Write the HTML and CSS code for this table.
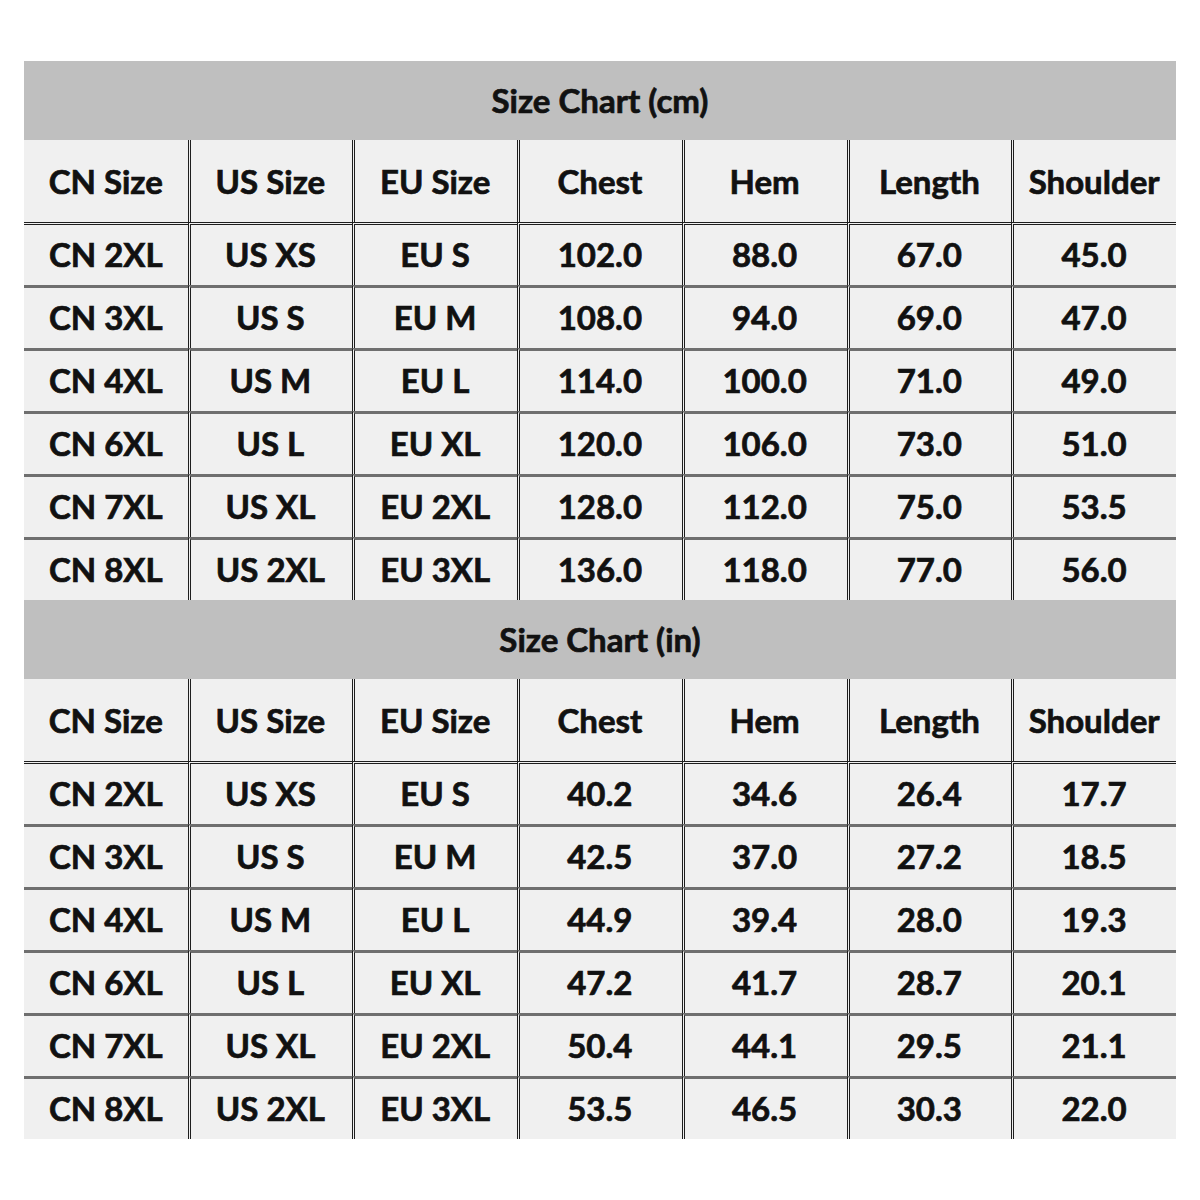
FILE: index.html
```html
<!DOCTYPE html>
<html>
<head>
<meta charset="utf-8">
<link rel="stylesheet" href="styles.css">
</head>
<body>
<div class="chart">
  <div class="title">Size Chart (cm)</div>
  <div class="grid">
    <div class="c h">CN Size</div><div class="c h">US Size</div><div class="c h">EU Size</div><div class="c h">Chest</div><div class="c h">Hem</div><div class="c h">Length</div><div class="c h">Shoulder</div>
    <div class="c f">CN 2XL</div><div class="c f">US XS</div><div class="c f">EU S</div><div class="c f">102.0</div><div class="c f">88.0</div><div class="c f">67.0</div><div class="c f">45.0</div>
    <div class="c">CN 3XL</div><div class="c">US S</div><div class="c">EU M</div><div class="c">108.0</div><div class="c">94.0</div><div class="c">69.0</div><div class="c">47.0</div>
    <div class="c">CN 4XL</div><div class="c">US M</div><div class="c">EU L</div><div class="c">114.0</div><div class="c">100.0</div><div class="c">71.0</div><div class="c">49.0</div>
    <div class="c">CN 6XL</div><div class="c">US L</div><div class="c">EU XL</div><div class="c">120.0</div><div class="c">106.0</div><div class="c">73.0</div><div class="c">51.0</div>
    <div class="c">CN 7XL</div><div class="c">US XL</div><div class="c">EU 2XL</div><div class="c">128.0</div><div class="c">112.0</div><div class="c">75.0</div><div class="c">53.5</div>
    <div class="c">CN 8XL</div><div class="c">US 2XL</div><div class="c">EU 3XL</div><div class="c">136.0</div><div class="c">118.0</div><div class="c">77.0</div><div class="c">56.0</div>
  </div>
  <div class="title">Size Chart (in)</div>
  <div class="grid">
    <div class="c h">CN Size</div><div class="c h">US Size</div><div class="c h">EU Size</div><div class="c h">Chest</div><div class="c h">Hem</div><div class="c h">Length</div><div class="c h">Shoulder</div>
    <div class="c f">CN 2XL</div><div class="c f">US XS</div><div class="c f">EU S</div><div class="c f">40.2</div><div class="c f">34.6</div><div class="c f">26.4</div><div class="c f">17.7</div>
    <div class="c">CN 3XL</div><div class="c">US S</div><div class="c">EU M</div><div class="c">42.5</div><div class="c">37.0</div><div class="c">27.2</div><div class="c">18.5</div>
    <div class="c">CN 4XL</div><div class="c">US M</div><div class="c">EU L</div><div class="c">44.9</div><div class="c">39.4</div><div class="c">28.0</div><div class="c">19.3</div>
    <div class="c">CN 6XL</div><div class="c">US L</div><div class="c">EU XL</div><div class="c">47.2</div><div class="c">41.7</div><div class="c">28.7</div><div class="c">20.1</div>
    <div class="c">CN 7XL</div><div class="c">US XL</div><div class="c">EU 2XL</div><div class="c">50.4</div><div class="c">44.1</div><div class="c">29.5</div><div class="c">21.1</div>
    <div class="c">CN 8XL</div><div class="c">US 2XL</div><div class="c">EU 3XL</div><div class="c">53.5</div><div class="c">46.5</div><div class="c">30.3</div><div class="c">22.0</div>
  </div>
</div>
</body>
</html>
```
FILE: styles.css
```css
html, body {
  margin: 0;
  padding: 0;
  background: #ffffff;
}
body {
  padding: 61px 24px 0 24px;
  font-family: Lato, "Liberation Sans", sans-serif;
  font-weight: 700;
  color: #111111;
  -webkit-text-stroke: 0.7px #111111;
}
.chart {
  width: 1152px;
}
.title {
  height: 79px;
  background: #bfbfbf;
  display: flex;
  align-items: center;
  justify-content: center;
  font-size: 33px;
  box-sizing: border-box;
  padding-bottom: 1px;
}
.grid {
  display: grid;
  grid-template-columns: 163.5px repeat(6, 1fr);
  grid-template-rows: 82px;
  grid-auto-rows: 63px;
}
.c {
  background: #f0f0f0;
  display: flex;
  align-items: center;
  justify-content: center;
  font-size: 33px;
  box-sizing: border-box;
  border-left: 3px double #1e1e1e;
  border-top: 3px solid #6f6f6f;
  padding-bottom: 3px;
  padding-right: 2px;
}
.c:nth-child(7n+1) {
  border-left: none;
  padding-left: 2px;
}
.c.h {
  border-top: none;
  padding-bottom: 0;
}
.c.f {
  border-top: 3px double #1e1e1e;
}
```
